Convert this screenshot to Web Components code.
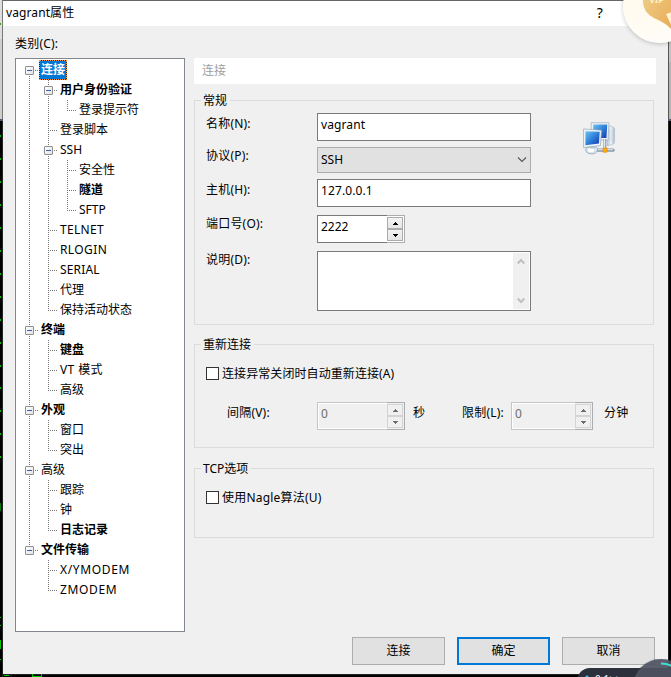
<!DOCTYPE html>
<html lang="zh-CN">
<head>
<meta charset="utf-8">
<title>vagrant属性</title>
<style>
html,body{margin:0;height:100%;overflow:hidden;background:#000}
body{font:12px/18px "Noto Sans","Noto Sans CJK SC",sans-serif;color:#000}
</style>
</head>
<body>
<app-desktop>
  <session-dialog heading="vagrant属性">
    <category-tree slot="tree">
      <tree-node root first open selected bold label="连接">
        <tree-node open bold label="用户身份验证"><tree-node last label="登录提示符"></tree-node></tree-node>
        <tree-node label="登录脚本"></tree-node>
        <tree-node open label="SSH">
          <tree-node label="安全性"></tree-node>
          <tree-node bold label="隧道"></tree-node>
          <tree-node last label="SFTP"></tree-node>
        </tree-node>
        <tree-node track=".3" label="TELNET"></tree-node>
        <tree-node track=".4" label="RLOGIN"></tree-node>
        <tree-node track=".15" label="SERIAL"></tree-node>
        <tree-node label="代理"></tree-node>
        <tree-node last label="保持活动状态"></tree-node>
      </tree-node>
      <tree-node open bold label="终端">
        <tree-node bold label="键盘"></tree-node>
        <tree-node track=".4" label="VT 模式"></tree-node>
        <tree-node last label="高级"></tree-node>
      </tree-node>
      <tree-node open bold label="外观">
        <tree-node label="窗口"></tree-node>
        <tree-node last label="突出"></tree-node>
      </tree-node>
      <tree-node open label="高级">
        <tree-node label="跟踪"></tree-node>
        <tree-node label="钟"></tree-node>
        <tree-node last bold label="日志记录"></tree-node>
      </tree-node>
      <tree-node open last bold label="文件传输">
        <tree-node track=".65" label="X/YMODEM"></tree-node>
        <tree-node last track=".65" label="ZMODEM"></tree-node>
      </tree-node>
    </category-tree>
    <connection-page slot="page"></connection-page>
    <push-button slot="actions">连接</push-button>
    <push-button slot="actions" default>确定</push-button>
    <push-button slot="actions">取消</push-button>
  </session-dialog>
  <vip-badge slot="overlay"></vip-badge>
  <net-meter slot="overlay"></net-meter>
</app-desktop>
<script>
const define = (name, render) => customElements.define(name, class extends HTMLElement {
  constructor() { super(); this.attachShadow({mode: 'open'}); }
  connectedCallback() {
    const t = document.createElement('template');
    t.innerHTML = render(this);
    this.shadowRoot.replaceChildren(t.content.cloneNode(true));
  }
});

/* Terminal windows visible around the dialog */
define('app-desktop', () => {
  let marks = '';
  for (let i = 0; i < 15; i++) { const y = Math.round(135 + i * 22.95); marks += `<path d="M0 ${y}h1v2h-1z"/>`; }
  return `<style>
  :host{display:block;position:relative;width:671px;height:677px;overflow:hidden;box-sizing:border-box;padding-left:3px;background:#000}
  svg{position:absolute;left:0;top:0}
  </style>
  <svg width="671" height="677" shape-rendering="crispEdges">
    <path fill="#dedede" d="M0 0h3v39h-3z"/><path fill="#cecece" d="M0 39h3v80h-3z"/>
    <path fill="#777" d="M2 0h1v119h-1z"/><path fill="#555b70" d="M0 119h3v2h-3zM668 119h3v2h-3z"/>
    <path fill="#c4c4c4" d="M669 0h2v62h-2z"/><path fill="#b4b4b4" d="M669 62h2v57h-2z"/>
    <path fill="#555" d="M668 0h1v119h-1z"/>
    <path fill="#222" d="M2 121h1v556h-1zM668 121h1v556h-1zM2 674h667v1h-667z"/>
    <path fill="#4b9a10" d="M0 23h1v2h-1z"/>
    <g fill="#00c800">${marks}
    <path fill="#008000" d="M0 503h1v8h-1z"/><path d="M0 617h1v1h-1zM0 625h1v1h-1zM0 640h1v9h-1zM0 659h1v1h-1zM4 675h5v1h-5zM32 674h1v3h-1zM41 674h1v3h-1zM32 676h10v1h-10z"/></g>
  </svg><slot></slot><slot name="overlay"></slot>`;
});

define('session-dialog', el => `<style>
  :host{position:relative;display:flex;flex-direction:column;width:665px;height:674px;background:#f0f0f0;border-top:1px solid #666;box-sizing:border-box}
  header{height:25px;box-sizing:border-box;background:#fff;padding:3px 65px 0 3px;display:flex;justify-content:space-between;letter-spacing:.1px}
  .help{font-size:14px}
  .cap{padding:9px 0 0 12px;height:32px;box-sizing:border-box;letter-spacing:.2px}
  main{display:flex;gap:9px;padding-left:12px}
  footer{display:flex;gap:12px;justify-content:flex-end;padding:5px 13px 0 0}
  </style>
  <header><span>${el.getAttribute('heading')}</span><span class="help">?</span></header>
  <div class="cap">类别(C):</div>
  <main><slot name="tree"></slot><slot name="page"></slot></main>
  <footer><slot name="actions"></slot></footer>`);

define('category-tree', () => `<style>
  :host{display:block;flex:none;box-sizing:border-box;width:170px;height:574px;background:#fff;border:1px solid #828790;padding:1px 0 0 9px}
  </style><slot></slot>`);

define('tree-node', el => {
  const has = a => el.hasAttribute(a), open = has('open');
  return `<style>
  :host{display:block;background:repeating-linear-gradient(#777 0 1px,transparent 1px 2px) 4px ${has('first') ? 10 : 0}px/1px ${has('last') ? '11px' : '100%'} no-repeat}
  .row{display:flex;height:20px}
  .lead{width:${open ? 14 : 13}px;display:flex;align-items:flex-start;padding-top:${open ? 6 : 10}px;box-sizing:border-box;flex:none}
  .box{width:7px;height:7px;border:1px solid #8e8e8e;border-radius:1px;background:linear-gradient(#3c5fa8,#3c5fa8) 1px 3px/5px 1px no-repeat,linear-gradient(135deg,#fff,#e2e2e2)}
  .dots{height:1px;background:repeating-linear-gradient(90deg,#777 0 1px,transparent 1px 2px)}
  .open{width:4px;margin:4px 0 0 1px}.leaf{width:9px;margin-left:4px}
  .label{white-space:nowrap;padding:0 2px;margin-left:${open ? 0 : 1}px;line-height:19px;height:20px;box-sizing:border-box;letter-spacing:${el.getAttribute('track') || 0}px;font-weight:${has('bold') ? 700 : 400}}
  .sel{background:#0078d7;color:#fff;box-shadow:inset 0 0 0 1px #1a2a3a;outline:1px dotted #ff9b3d;outline-offset:-1px}
  .kids{padding-left:19px}
  </style>
  <div class="row"><span class="lead">${open ? '<i class="box"></i><i class="dots open"></i>' : '<i class="dots leaf"></i>'}</span><span class="label ${has('selected') ? 'sel' : ''}">${el.getAttribute('label')}</span></div>
  <div class="kids"><slot></slot></div>`;
});

define('group-box', el => `<style>
  :host{display:block;box-sizing:border-box;width:460px}
  fieldset{box-sizing:border-box;height:100%;margin:0;border:1px solid #dcdcdc;padding:0;position:relative;min-width:0}
  .legend{position:absolute;left:6px;top:-9px;background:#f0f0f0;padding:0 3px 0 2px;line-height:18px}
  </style><fieldset><span class="legend">${el.getAttribute('label')}</span><slot></slot></fieldset>`);

define('text-field', el => `<style>
  :host{display:block;box-sizing:border-box;width:214px;height:28px;background:#fff;border:1px solid #7a7a7a;padding:2px 0 0 3px;letter-spacing:.1px}
  </style>${el.getAttribute('value')}`);

define('combo-box', el => `<style>
  :host{display:flex;justify-content:space-between;box-sizing:border-box;width:214px;height:26px;background:#e1e1e1;border:1px solid #adadad;padding:3px 3px 0 3px}
  svg{margin-top:4px}
  </style><span>${el.getAttribute('value')}</span><svg width="10" height="10"><path d="M1 2.5l4 4 4-4" fill="none" stroke="#555" stroke-width="1.1"/></svg>`);

define('memo-field', () => `<style>
  :host{display:flex;justify-content:flex-end;box-sizing:border-box;width:214px;height:60px;background:#fff;border:1px solid #7a7a7a;padding:1px}
  div{width:16px;background:#f0f0f0;display:flex;flex-direction:column;justify-content:space-between;align-items:center;padding:5px 0;box-sizing:border-box}
  svg{display:block}
  </style><div><svg width="8" height="7"><path d="M.7 5.5L4 2l3.300 3.500" fill="none" stroke="#bfbfbf" stroke-width="2"/></svg><svg width="8" height="7"><path d="M.7 1.500L4 5l3.300-3.500" fill="none" stroke="#bfbfbf" stroke-width="2"/></svg></div>`);

define('spin-field', el => {
  const off = el.hasAttribute('disabled');
  return `<style>
  :host{display:flex;width:88px;height:28px;box-sizing:border-box;flex:none}
  .v{flex:1;box-sizing:border-box;border:1px solid ${off ? '#c6c6c6' : '#7a7a7a'};border-right:0;background:${off ? '#f0f0f0' : '#fff'};color:${off ? '#6d6d6d' : '#000'};padding:2px 0 0 3px;${off ? 'box-shadow:inset 1px 1px #fff,inset 0 -1px #fff;' : ''}}
  .s{width:18px;box-sizing:border-box;border:1px solid #abadb3;border-left:0;background:${off ? '#f0f0f0' : '#fff'};padding:1px 1px 1px 0;display:flex;flex-direction:column}
  b{flex:1;box-sizing:border-box;border:1px solid ${off ? '#d4d4d4' : '#acacac'};background:${off ? '#f0f0f0' : 'linear-gradient(#f3f3f3,#e6e6e6)'};display:flex;align-items:center;justify-content:center}
  svg{display:block;fill:${off ? '#6d6d6d' : '#000'}}
  </style><span class="v">${el.getAttribute('value')}</span><span class="s"><b><svg width="5" height="3" shape-rendering="crispEdges"><path d="M2 0h1v1h1v1h1v1H0V2h1V1h1z"/></svg></b><b><svg width="5" height="3" shape-rendering="crispEdges"><path d="M0 0h5v1H4v1H3v1H2V2H1V1H0z"/></svg></b></span>`;
});

define('check-box', () => `<style>
  :host{display:flex;gap:3px;height:18px;align-items:flex-start;letter-spacing:.08px}
  i{width:11px;height:11px;border:1px solid #333;background:#fff;flex:none;margin-top:2px}
  </style><i></i><span><slot></slot></span>`);

define('push-button', el => `<style>
  :host{display:flex;align-items:center;justify-content:center;box-sizing:border-box;width:93px;height:28px;padding-bottom:1px;background:#e1e1e1;border:${el.hasAttribute('default') ? '2px solid #0078d7' : '1px solid #adadad'}}
  </style><slot></slot>`);

define('network-icon', () => `<style>:host{display:block;width:33px;height:33px}svg{display:block}</style>
  <svg width="32" height="33" viewBox="0 0 33 33" preserveAspectRatio="none">
  <defs><linearGradient id="g" x1="0" y1="0" x2="1" y2="1"><stop offset="0" stop-color="#6cc4f2"/><stop offset=".5" stop-color="#2f80d8"/><stop offset="1" stop-color="#1738b0"/></linearGradient>
  <linearGradient id="t"><stop offset="0" stop-color="#b4c6d4"/><stop offset=".5" stop-color="#eef4f8"/><stop offset="1" stop-color="#a9bac8"/></linearGradient></defs>
  <path d="M25 3l6 2q1.500 .5 1.500 2v13q0 1.500-1.500 2l-6 2z" fill="url(#t)" stroke="#aab8c4" stroke-width=".6"/>
  <path d="M27.500 7v13M30 8v11" stroke="#c7d4de" stroke-width="1"/>
  <path d="M8.500 .7h18.300l-1 17.300H8.500z" fill="#eef3f7" stroke="#a5b4c0" stroke-width=".8"/>
  <path d="M10.500 2.500h14.500l-.8 13.500H10.500z" fill="url(#g)"/>
  <path d="M13 28.200h18" stroke="#8799a9" stroke-width="3.200" stroke-linecap="round"/><path d="M13 27.700h18" stroke="#d8e3eb" stroke-width="1.200"/>
  <path d="M22.500 17v10" stroke="#8799a9" stroke-width="3"/><path d="M22.200 17v10" stroke="#dfe8ef" stroke-width="1.400"/>
  <path d="M2.500 28q0-2.500 4-3h7q2 .8 1.500 3-1 4-6.500 4-5 0-6-4z" fill="#d9e4ed" stroke="#92a6b6" stroke-width=".8"/><ellipse cx="8" cy="28" rx="3.300" ry="2" fill="#fff"/>
  <path d="M7 23h5v3.500H7z" fill="#b9c9d6"/>
  <path d="M.6 7l18.400 1.200-1 15.300L.6 25.500z" fill="#f3f7fa" stroke="#9aacba" stroke-width=".8"/>
  <path d="M2.500 9.200l14.700.6-.7 11.700-14 1.700z" fill="url(#g)"/>
  <path d="M20.800 26h4v4.200h-4z" fill="#ffad18" stroke="#e08400" stroke-width=".7"/>
  </svg>`);

define('connection-page', () => `<style>
  :host{display:flex;flex-direction:column;width:462px;height:574px}
  .title{height:26px;box-sizing:border-box;background:#fff;color:#a0a0a0;padding:4px 0 0 8px}
  .general{height:225px;margin-top:16px}.re{height:104px;margin-top:19px}.tcp{height:70px;margin-top:20px}
  .cols{display:flex;padding:12px 0 0 11px}
  form{display:grid;grid-template-columns:111px 214px;grid-template-rows:34px 32px 36px 36px 60px;align-items:start}
  form>span,.time>span{letter-spacing:.2px}
  .n{padding-top:2px}
  network-icon{margin:9px 0 0 52px}
  .re check-box{padding:20px 0 0 11px}
  .tcp check-box{padding:20px 0 0 11px;letter-spacing:.2px}
  .time{display:flex;padding:19px 0 0 32px}
  .time span{padding-top:2px;white-space:nowrap}
  .a{width:90px}.b{width:49px;padding-left:8px}.c{width:49px}.d{padding-left:11px!important}
  .lim{width:82px}
  </style>
  <div class="title">连接</div>
  <group-box class="general" label="常规"><div class="cols"><form>
    <span class="n">名称(N):</span><text-field value="vagrant"></text-field>
    <span>协议(P):</span><combo-box value="SSH"></combo-box>
    <span class="n">主机(H):</span><text-field value="127.0.0.1"></text-field>
    <span>端口号(O):</span><spin-field value="2222"></spin-field>
    <span>说明(D):</span><memo-field></memo-field></form>
    <network-icon></network-icon></div></group-box>
  <group-box class="re" label="重新连接"><check-box>连接异常关闭时自动重新连接(A)</check-box>
    <div class="time"><span class="a">间隔(V):</span><spin-field disabled value="0"></spin-field><span class="b">秒</span><span class="c">限制(L):</span><spin-field class="lim" disabled value="0"></spin-field><span class="d">分钟</span></div></group-box>
  <group-box class="tcp" label="TCP选项"><check-box>使用Nagle算法(U)</check-box></group-box>`);

/* Floating membership badge cut off by the corner of the screen */
define('vip-badge', () => `<style>
  :host{position:absolute;left:623px;top:-31px;width:74px;height:74px;border-radius:50%;background:linear-gradient(#fff8e4,#fffdf8);box-shadow:0 1px 4px rgba(0,0,0,.22)}
  svg{position:absolute;left:0;top:0}
  span{position:absolute;left:26px;top:24px;font:bold 9px/14px "Noto Sans",sans-serif;color:#fff0bd}
  </style><svg width="74" height="74"><defs><linearGradient id="o" x1="0" y1="0" x2="1" y2="1"><stop offset="0" stop-color="#efcf8c"/><stop offset="1" stop-color="#e8a951"/></linearGradient></defs>
  <path d="M20 30q-1 13 11 19 9 4 14 8l6 6V20H24z" fill="url(#o)"/><path d="M43 45l6-2v15z" fill="#fff3d3"/></svg><span>VIP</span>`);

/* Floating network speed widget */
define('net-meter', () => `<style>
  :host{position:absolute;left:577px;top:659px;width:94px;height:18px;overflow:hidden}
  .pill{position:absolute;left:0;top:9px;width:100px;height:26px;border-radius:13px;background:#2c303c;color:#fff;font:10px/14px "Noto Sans",sans-serif;white-space:nowrap}
  .pill span{position:absolute;left:18px;top:4px}
  small{font-size:9px;color:#aaa}
  .pill svg{position:absolute;left:7px;top:7px}
  .ring{position:absolute;left:56px;top:0;width:56px;height:56px;border-radius:50%;background:rgba(78,82,98,.92);box-shadow:0 0 1px #333}
  .ring svg{display:block}
  </style><div class="pill"><svg width="6" height="8"><path d="M3 0l3 3H4v4H2V3H0z" fill="#38b6ed"/></svg><span>0.1<small>k/s</small></span></div>
  <div class="ring"><svg width="56" height="56"><path d="M28 4.500a24 24 0 0 1 17 7" fill="none" stroke="#3fe0d0" stroke-width="2"/></svg></div>`);
</script>
</body>
</html>
